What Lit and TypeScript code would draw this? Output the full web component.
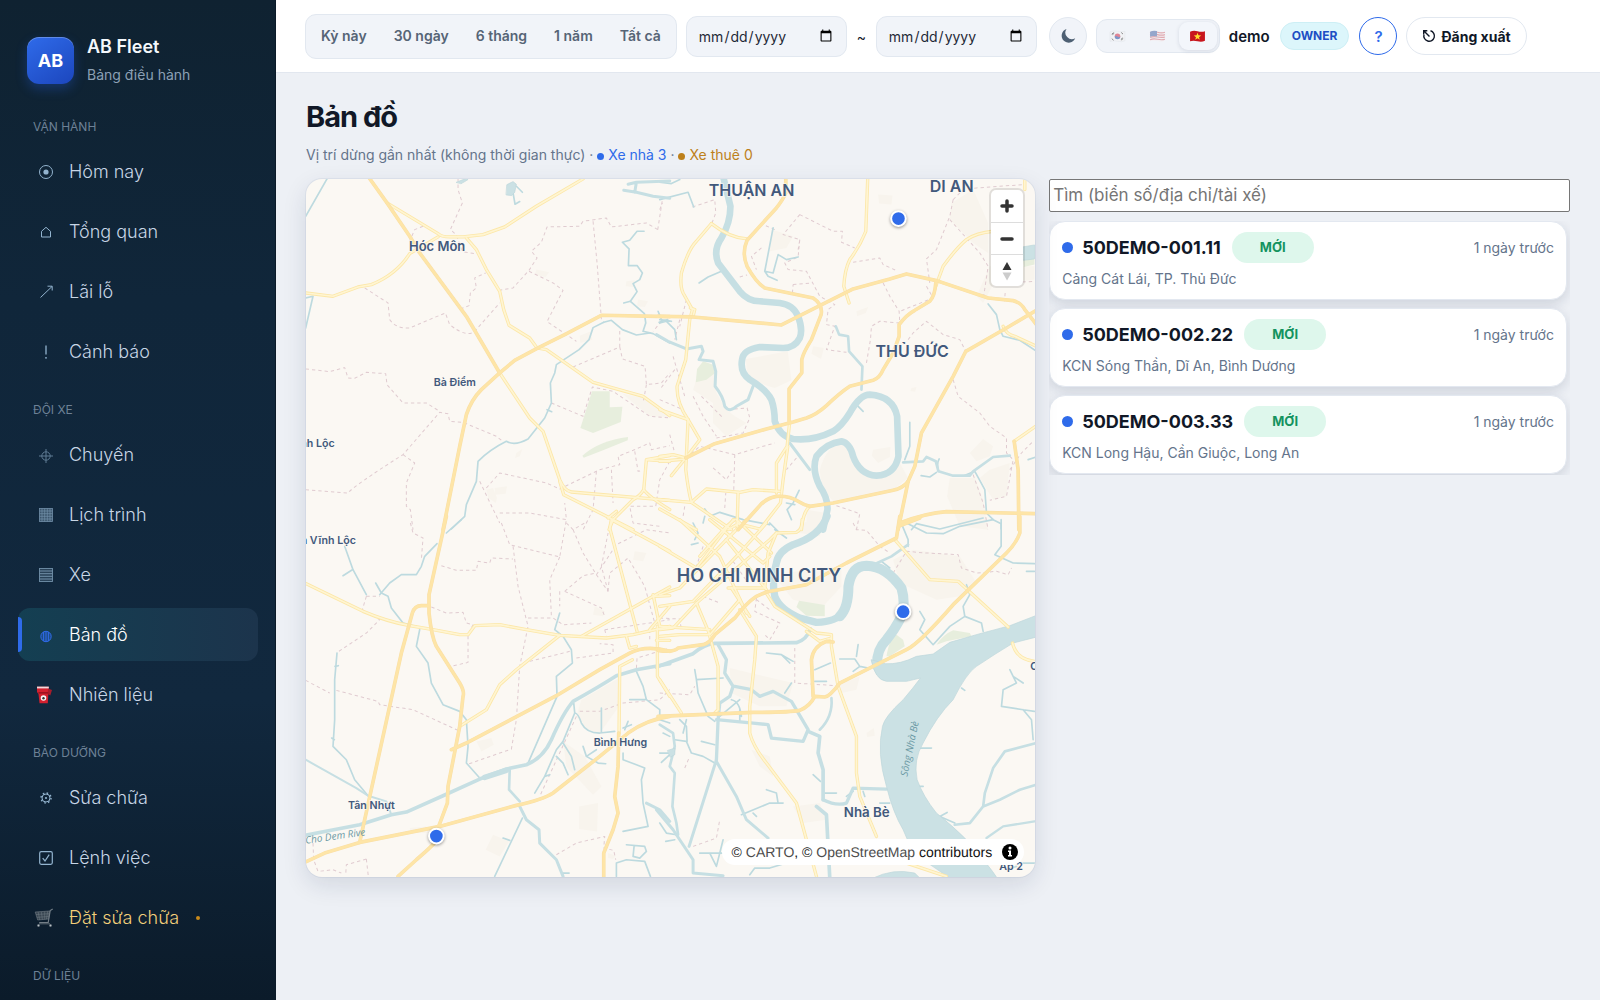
import { LitElement, html, css, svg, nothing } from "lit";
import { customElement, property } from "lit/decorators.js";
import { classMap } from "lit/directives/class-map.js";

/* ---------- icons ---------- */
const navIcons: Record<string, unknown> = {
  today: svg`<circle cx="12" cy="12" r="6.5"/><circle cx="12" cy="12" r="2.6" fill="currentColor" stroke="none"/>`,
  home: svg`<path d="M7.5 17V11.3L12 7.3l4.500 4V17z"/>`,
  profit: svg`<path d="M6.500 17.500L18 6.500M13.500 6.200H18.200V10.500"/>`,
  alert: svg`<path d="M12 5.500V14.500" stroke-width="1.300"/><circle cx="12" cy="17.800" r=".9" fill="currentColor" stroke="none"/>`,
  trip: svg`<g opacity=".6"><circle cx="12" cy="13" r="4.200"/><path d="M5 13H19M12 6V20"/></g>`,
  calendar: svg`<g opacity=".75"><rect x="5.500" y="5.500" width="13" height="13" fill="currentColor" fill-opacity=".45" stroke-width=".8"/><path d="M8 5.500V18.500M10.700 5.500V18.500M13.300 5.500V18.500M16 5.500V18.500M5.500 8H18.500M5.500 10.700H18.500M5.500 13.300H18.500M5.500 16H18.500" stroke-width=".7"/></g>`,
  truck: svg`<g opacity=".75"><rect x="5.500" y="5.500" width="13" height="13" fill="currentColor" fill-opacity=".25" stroke-width=".9"/><path d="M5.500 8H18.500M5.500 10.700H18.500M5.500 13.300H18.500M5.500 16H18.500"/></g>`,
  map: svg`<circle cx="12" cy="13.500" r="5.200" fill="currentColor" fill-opacity=".35"/><path d="M12 8.300V18.700M9.600 9V18M14.400 9V18"/>`,
  fuel: svg`<g stroke="none"><path d="M3 3.800H14.800L13.800 20.200H5.500L4.500 11 3 9z" fill="#d3202f"/><path d="M14 5.500L18 7 16.300 12.500 13.700 11z" fill="#a81c2b"/><path d="M3 3.600H14.800V5.400H3z" fill="#f3d9dc"/><path d="M4.300 9.200H14.300V10.400H4.500z" fill="#8d101c"/><circle cx="9.500" cy="15" r="2.800" fill="#f6f6f6"/><circle cx="9.500" cy="15.200" r="1.200" fill="#333"/></g>`,
  gear: svg`<circle cx="12" cy="12" r="4"/><circle cx="12" cy="12" r="1.100" fill="currentColor" stroke="none"/><circle cx="12" cy="12" r="5" stroke-width="1.400" stroke-dasharray="1.600 2.327"/>`,
  order: svg`<rect x="5.700" y="5.700" width="12.600" height="12.600" rx="1.500" stroke-width="1.200"/><path d="M8.700 12.200L11 15 15.200 8.700" stroke-width="1.200"/>`,
  cart: svg`<g stroke="#737e87"><path d="M18.700 3L16.200 4.500 14.200 16.500H5.200" stroke-width="1.200"/><path d="M1.200 6L15.700 5 14.400 13 3.700 14z" fill="#4b565f" fill-opacity=".7" stroke-width=".6"/><path d="M4.200 6L5.700 14M7.400 6L8.400 13.600M10.700 5.500V13.500M13.700 5.200L12.400 13.200M2 8.500L15.300 7.700M2.900 11.300L14.700 10.500" stroke-width=".5"/><circle cx="4.500" cy="19.500" r="1" fill="#b8c0c6"/><circle cx="16.500" cy="19.500" r="1" fill="#b8c0c6"/><path d="M5 17.800H16" stroke-width=".8"/></g>`,
};

const flags: Record<string, unknown> = {
  ko: svg`<path d="M1 2.500Q4 1 8 2T15 2V11Q12 12.500 8 11.500T1 11.500z" fill="#f1f2f4" stroke="#dcdfe4" stroke-width=".5"/><circle cx="8" cy="6.800" r="2.600" fill="#d9566b"/><path d="M5.400 7A2.600 2.600 0 0 0 10.600 7Q9.300 8.200 8 7T5.400 7z" fill="#4a6fb5"/><path d="M2.600 4.800L4.400 3.300M3.200 5.300L4.900 3.900M11.500 3.200L13.200 4.700M2.600 9L4.300 10.500M11.500 10.300L13.300 8.900M11.200 9.700L12.900 8.300" stroke="#444" stroke-width=".8"/>`,
  en: svg`<path d="M1 2.500Q4 1 8 2T15 2V11Q12 12.500 8 11.500T1 11.500z" fill="#f3eff1"/><path d="M1 3.400Q4 2 8 3T15 3M1 5.600Q4 4.200 8 5.200T15 5.200M1 7.800Q4 6.500 8 7.400T15 7.400M1 10Q4 8.700 8 9.600T15 9.600" stroke="#d98a93" stroke-width="1.100" fill="none"/><path d="M1 2.500Q4 1 7.500 1.900V6.900Q4 6 1 7.200z" fill="#6f86b8"/>`,
  vi: svg`<path d="M1 2.500Q4 1 8 2T15 2V11Q12 12.500 8 11.500T1 11.500z" fill="#c8161d"/><path d="M8 3.400L8.900 5.900 11.500 6 9.400 7.600 10.200 10.100 8 8.600 5.800 10.100 6.600 7.600 4.500 6 7.100 5.900z" fill="#ffde2e"/>`,
};

/* ---------- map geometry ----------
   The canvas is split in four tiles; each path uses its own tile's units. */
interface Tile {
  x: number;
  y: number;
  urban?: string[];
  green?: string[];
  lake?: string[];
  river?: [number, string][];
  stream?: string[];
  border?: string[];
  minor?: string[];
  major?: string[];
}

const tiles: Tile[] = [
  {
    x: 0,
    y: 0,
    urban: [
      "M710 300L748 308 738 322 706 316z",
      "M840 498L872 486 878 510 842 520z",
      "M968 672L1030 684 1110 735V742L1050 740z",
      "M585 955L622 950 618 972 586 975z",
      "M650 850L668 838 660 860 646 865z",
      "M1015 390L1045 395 1035 412 1012 410z",
      "M560 960L580 955 592 985 588 1000 566 985z",
      "M980 335L1005 332 1003 352 978 350z",
    ],
    green: [
      "M877 665H930V713L968 711 963 757 880 790 842 775z",
      "M848 858Q900 812 985 802L984 812 910 842 852 864z",
    ],
    lake: ["M622 45L640 36 650 44 645 68 636 78 620 76z", "M470 38L500 26 505 30 485 42z"],
    river: [[9, "M985 44L1010 38 1110 34M972 62L1010 68 1060 80 1110 86M1010 38L1005 68"]],
    stream: [
      "M83 26L18 140",
      "M18 385L40 380 18 475",
      "M640 70L646 104 660 96M650 50L668 68",
      "M1033 185H1012L990 212 968 218 988 238 986 288 1012 288 1028 310 1020 330 1000 342 1012 366 992 395 1034 432 1038 460 1030 485 1060 492 1110 520",
      "M972 400L992 395M1075 425L1086 452 1110 455M1078 458L1104 450",
      "M912 458L880 474 868 510 838 540 770 585 765 610 752 640 755 700 735 745 685 808Q645 830 620 815 570 840 535 875L530 935 500 1005 495 1040 455 1078",
      "M742 720L756 726",
      "M912 458L935 452 968 480 1010 496 1050 490",
    ],
    border: [
      "M475 26V60L488 100 452 180 470 196 488 246 524 252",
      "M370 170L345 180 330 215",
      "M195 355L265 400 270 450Q290 478 330 475L370 458 437 430 450 465Q500 505 525 485L600 400",
      "M482 418L508 408 512 370 530 355 525 325 558 310",
      "M1074 180L1088 90M1074 180L1040 160 935 172 920 145 850 155 840 170 742 172 725 218 695 245 712 265 688 302 640 355 600 362",
      "M880 155L892 280 905 450",
      "M688 305L760 340 790 362 742 456 830 515",
      "M18 598L90 606 135 594 145 625 165 626 200 608 258 612 262 645 310 700 380 700 420 725",
      "M18 960L145 970Q160 950 310 855L420 728 445 732 450 755 490 758 590 800 605 812",
      "M310 855L345 880 320 940 320 1010 332 1020 340 1080",
      "M540 935L600 1060M560 955L600 910 740 940 780 958 900 900 960 885 955 860 1000 842 1050 820 1055 840 1110 828",
      "M600 1030H690L800 1050 795 1000",
      "M755 700L850 740 878 652 940 665 1050 740 1110 745",
      "M820 592L960 532 960 480M960 532L968 568 1036 590 1040 645 1085 640 1110 610M1040 645L1030 700",
      "M890 905L880 1020 850 1080M935 900L940 1000M1005 845L1015 905 1030 902M1110 875L1080 930 1068 1010 990 1010 1000 1060 1080 1070",
      "M1085 455L1060 485",
    ],
    minor: [
      "M262 100L415 192Q425 202 450 202H490L550 195 615 172 710 110 850 28",
      "M18 370L100 380 175 352 215 345Q290 315 330 252L415 202",
      "M500 205L530 240 560 300 600 365 612 420 628 467 690 505 712 535 740 540 880 638 1030 680 1110 738",
      "M600 610L690 745 730 785 780 930Q795 965 815 967L1110 992",
      "M780 935L792 975 1000 1080",
      "M1110 858L1040 870 1032 960Q1020 980 1000 990L940 1050 928 1080M1032 960Q1045 980 1110 1020M1110 875L1040 870M925 1045L950 1025",
    ],
    major: ["M205 20L262 100 330 200 360 250 500 440 600 610", "M1110 441L905 437 795 495 715 535 645 572 600 610 545 660Q515 690 500 735L480 830 430 1080"],
  },
  {
    x: 1080,
    y: 0,
    urban: [
      "M258 568L384 545 395 632 345 655Q285 640 262 610z",
      "M480 900Q500 830 545 820 575 850 590 890 640 935 700 910L720 880 745 925 700 960 520 995Q480 950 480 900z",
      "M110 630L165 600 170 670 200 720 225 740 260 760 200 800 160 760 160 700 100 660z",
      "M875 100L940 60 985 160 985 250 940 220 870 150z",
      "M870 925H945L970 990 985 1080 900 1070 862 980z",
      "M990 900L1050 880 1040 980 1000 990 960 925z",
      "M655 75L698 78 695 105 658 102z",
      "M335 180L400 200 380 235 330 245z",
      "M990 290L1124 290V330L1000 345 970 400 950 380z",
      "M640 840L692 832 690 862 655 880 636 858z",
      "M930 850L970 808 1000 830 990 860 950 875z",
      "M590 425L625 412 618 430 592 440z",
      "M460 530L492 535 484 568 455 552z",
      "M755 655L770 652 766 666 752 664z",
      "M440 1020L500 1030 480 1080H440z",
    ],
    green: ["M112 598L130 575 160 585 166 610 140 630 108 638z", "M1090 270L1124 262V285L1092 292z"],
    lake: ["M1088 232L1124 226V268L1092 272z"],
    river: [
      [
        20,
        "M190 20L212 110Q212 160 185 205 160 240 175 280L240 365Q265 395 300 395L360 400Q400 405 415 440 430 480 420 505 405 535 370 535L300 532Q250 540 247 570 240 610 270 630 320 660 335 690 345 720 345 755 360 800 400 808 460 815 520 785 545 770 570 730 600 675 630 675 700 680 712 740L716 860Q705 915 650 918 600 915 580 860 570 820 545 815 500 820 470 860 455 900 480 950 505 985 503 1020L490 1080",
      ],
      [9, "M-10 495L25 515 80 538 125 530 130 545 118 570 160 575 168 605 166 650Q190 680 195 710 210 730 230 710L265 690 280 650M390 820L450 900"],
      [8, "M528 470L538 495 565 500 568 545 608 590 605 660"],
      [8, "M730 878L790 875 800 862 828 875 836 905 880 918 930 918 940 905 1000 862 1050 858"],
    ],
    stream: [
      "M0 90L85 68 102 112M0 38L35 42 60 30",
      "M340 175L315 305 340 310 355 255M355 255L380 270 415 262M315 305L325 320 352 332",
      "M185 305L145 322 118 340",
      "M0 460L20 455 45 480 50 510M0 450L35 455",
      "M985 403L1010 435 1020 480 1030 500 1080 512 1130 545",
      "M750 758V830L735 870M590 705L610 725M836 905Q830 880 838 868M784 918L810 922 830 908M912 918L945 905 975 960 980 1030 1000 1050M1000 1050L1024 1062 1024 1078",
      "M135 1018L150 1040 180 1028 250 1050 330 1065M135 1040L130 1060",
      "M418 962L400 1000 382 1020 395 1050M380 1000L405 1005",
      "M755 1080L770 1062 840 1078 970 1045",
      "M1105 870L1130 862",
    ],
    border: [
      "M98 112L165 90 168 130 155 165",
      "M420 135L520 185H548L545 218 585 235M420 135L370 195 420 210 415 240M420 210L415 262 375 280 385 300 440 305 480 380 525 405 505 420 500 465 525 470 500 540 560 548",
      "M345 180L310 165M305 235L275 260 290 300M240 322L262 316",
      "M400 345L455 340M398 370L400 345",
      "M580 278L660 265 670 285 708 302M670 340L690 380 718 425 720 460 660 455 635 470 632 510 620 580",
      "M880 90L910 60 950 55 1090 45M880 90L870 140 830 240 800 268 810 340M870 150L960 250 985 290 970 390M1050 340L1124 335",
      "M745 510L760 490 800 455 850 495 900 510 918 545M800 350L820 385 720 425",
      "M880 630L895 680 960 730 990 770 1040 805V850L1060 870 1040 980 990 992",
      "M940 915L970 1000 985 1080M1050 900L1085 850 1120 815",
      "M60 450L45 510M40 560L75 680M45 600L0 660M0 690L70 720",
      "M100 680L130 740 170 800M125 680L190 745M205 720L262 715 270 745 250 790 170 805",
      "M80 865L120 830 225 855 310 830 345 820M195 1015L198 970M225 855L222 960M30 795L45 850M75 1010L70 1040M160 895L200 930 215 905",
      "M530 1008L600 1032 590 1080M410 865L380 900M80 390L60 470",
      "M1036 370L1034 395M0 120L8 100",
    ],
    minor: [
      "M624 20L618 185Q600 230 570 270 555 300 552 350L568 400",
      "M155 162L110 215Q85 240 65 310 60 350 70 370L98 420 90 450 78 570 52 650Q50 700 85 750L120 810 78 865 35 918",
      "M155 162Q210 205 262 208",
      "M85 750L78 900Q85 960 95 998",
      "M0 720L85 750",
      "M0 860L40 855 78 865M0 875L78 868",
      "M0 990L95 998 140 958 240 968 280 960 360 965",
      "M390 755L382 830 350 880V970M384 830L370 930 362 1000 300 1080",
      "M235 968L232 1070M95 998L215 1080M0 1018L110 1080M205 1080L235 1062 300 1078",
      "M450 1010Q430 1025 425 1080",
      "M1095 30V60M92 415L105 420 100 440",
      "M1030 470Q1040 495 1065 500L1130 530",
      "M1063 815L1130 768",
      "M828 350L850 290Q890 235 920 210 950 190 1000 185",
    ],
    major: [
      "M-5 440L100 442 365 466 480 408 580 358 690 328 740 313 830 333 985 385 1060 393Q1085 400 1095 420L1130 465",
      "M378 20V70Q370 90 350 115L262 212Q245 250 262 290 290 340 315 355L460 385Q490 405 484 435L455 510Q430 550 426 570V610L388 658V755",
      "M78 865L165 822 320 778 400 757 440 745Q470 735 500 708 540 670 570 650L640 632Q660 625 670 600L700 550 718 500V465Q740 435 765 422L810 395Q825 380 828 340",
      "M1130 422L1040 475 918 545 880 620 785 790 765 890 745 935 715 1080",
      "M745 935Q730 955 700 962L520 1000 450 1010Q430 1005 415 995 390 978 350 980 320 985 300 1008L235 1080",
      "M720 1060Q800 1030 860 1026L1130 1032",
      "M1063 815L1075 900 1077 1080",
    ],
  },
  {
    x: 0,
    y: 1050,
    urban: [
      "M845 540L958 475V560L900 640 860 630 830 590z",
      "M838 860L895 850 892 935 838 928z",
      "M580 945L628 965 600 1010 558 990z",
      "M530 665L575 655 582 675 545 695z",
      "M790 665L855 710 905 800 880 825 800 740z",
      "M885 260L915 275 910 290 880 285z",
      "M1005 95L1040 100 1030 125 1000 120z",
      "M330 925L380 920 390 940 335 940z",
      "M925 1000L948 1008 940 1018 925 1015z",
    ],
    river: [
      [11, "M10 948L180 915 275 885 320 877 430 828 540 778 620 748 680 735Q730 715 755 660 790 580 820 545 900 500 950 468L1010 450 1110 432"],
      [16, "M555 773L620 752"],
      [9, "M660 860L680 900 718 930 720 970 770 1020 790 1070M1040 850L1080 870 1110 905"],
      [8, "M630 750L628 810 660 845"],
      [6, "M18 720L170 805 205 828 260 845 275 885"],
    ],
    stream: [
      "M485 0L440 40M412 72L375 110 365 140 350 165H305L270 190 240 225M228 190L245 220 265 230 275 265 310 310 355 322",
      "M135 80L160 150 200 225M130 168L158 150",
      "M360 330L350 380 385 430 395 490 430 555 480 575 500 600M500 600L505 680 500 730 540 775",
      "M112 400L105 480 105 600 100 680 140 720 165 780 205 828M106 440L116 438M96 655L104 660",
      "M780 280L765 330 790 350 815 390 818 430 770 470 772 530 720 650 685 730",
      "M822 550L825 580 790 665 770 690 735 770 705 820M790 670L815 710 825 750M770 710L790 730 805 765M735 770L750 765",
      "M825 580Q835 580 845 610 860 640 900 640L945 635M905 565V638",
      "M985 605L975 630M1010 455L1030 500 1040 540 1080 570V600L1110 610M990 540H1036",
      "M850 680L860 710 890 690M860 710L895 730 918 732",
      "M970 700V720L1010 735 1035 745 1025 780 1030 850 1045 920 970 935",
      "M668 895L585 1070M610 955L630 962",
      "M980 975L1035 980 1040 995 1020 1015 1000 1010 1003 980M950 1070V1030L980 1020 1035 1025 1052 1070M790 1060H808",
      "M1110 705L1085 728M970 625L995 615",
    ],
    border: [
      "M332 10L340 40 370 55 365 120",
      "M605 10L630 75 780 112 800 0M640 80L655 200 685 320 660 440 650 600 635 688 500 735",
      "M425 138L470 152H530L535 125 570 130 575 115 640 118",
      "M780 112L750 180 755 290M685 295L760 295 790 315 875 310M820 30L850 100 890 165 925 215M925 215L930 160 985 115 1035 200 1065 310",
      "M925 215L905 140 925 40M795 215L850 168 890 160M795 215L905 265 915 290M780 215V260M800 10L820 30 855 10M890 165L950 75 1040 30 1110 40",
      "M915 330L1050 310 1110 300M915 330L920 350M690 425L810 395M830 415L940 400 940 375 900 372M1050 330V360M1010 445L1012 415 1110 385",
      "M18 482L90 520M110 512L235 545 240 555 340 570 475 632",
      "M200 230L188 270 240 300 200 340 110 400M200 230H240M395 262L440 280 490 278 500 310 520 315 505 345V428L455 440",
      "M830 590L720 830M840 575L900 575 970 550 1080 540 1110 510",
      "M770 1005L830 970 915 950 912 985 942 992 948 1020",
      "M40 970L42 1020 55 1055 100 1050M100 1050L125 1060M200 1018L140 1035 138 1065M200 1018L206 1070",
    ],
    minor: [
      "M15 190L190 275Q260 305 330 318L400 330 480 345H505L525 318 600 315 680 330 780 347 920 355 1000 345 1110 320",
      "M480 620L560 570 600 495 650 450 780 347",
      "M845 350L1110 202",
      "M935 0L930 25 1012 335",
      "M935 0L1110 95",
      "M1060 225L1080 320M1073 320V470L1110 530",
      "M980 350L990 385 1010 380M1065 230L1110 228M1050 330L1110 260M1070 362H1110",
      "M998 420L960 440 958 640",
    ],
    major: [
      "M440 -10L388 225V280Q395 350 410 380L480 490Q495 515 490 530L480 620 445 800 443 850 415 925",
      "M388 258H365Q345 258 338 280L305 400 180 968",
      "M10 1030L75 1000 180 968 420 920 650 857Q730 840 760 820L900 710 985 640Q1040 600 1110 590",
      "M410 965Q380 995 350 1020L295 1070",
      "M455 690L500 670 770 528 900 450 990 400Q1040 375 1110 395",
      "M957 640L955 740 945 830 955 880 940 930 912 1000V1070",
    ],
  },
  {
    x: 1080,
    y: 1050,
    urban: [
      "M700 120L760 90 900 110 950 190 900 230 830 240 720 190z",
      "M210 445L400 490 380 560 300 560 215 520z",
      "M370 160L545 140 545 200 490 260 400 240 360 190z",
      "M275 690L330 710 340 770 300 740z",
      "M400 860L480 850 500 900 430 910z",
      "M620 640L642 625 645 648 622 652z",
      "M420 10L490 0 480 50 420 40z",
      "M900 0H950V10H900z",
      "M540 495L600 470 590 510 545 520z",
    ],
    green: ["M410 262L418 243 495 256V290L440 288z", "M680 410Q690 350 710 345L730 360 735 380 690 410z", "M830 375Q850 345 880 332L930 340 935 350 860 365z"],
    lake: [
      "M1130 287L1050 318 960 342 870 368 820 403 770 410Q720 435 676 432L634 420Q645 480 680 485L740 485 782 475Q760 505 730 540 675 590 668 620 650 700 680 800 700 880 730 930L760 1000 870 1075H1012Q990 1040 915 955 880 920 830 880 790 830 772 780 760 720 790 670 830 590 880 540 920 460 950 440 1010 400 1060 370L1130 352z",
      "M640 1075Q700 1045 765 1060L780 1075z",
      "M24 692L46 685 45 705 32 712z",
    ],
    river: [
      [22, "M502 -10Q480 50 400 75 355 95 350 130 335 180 345 230 360 270 420 295L470 308Q530 305 548 280"],
      [30, "M540 290Q566 265 566 200 575 138 620 138 680 140 725 205 738 250 725 290 705 330 680 360 650 390 652 435"],
      [11, "M-10 442L100 402Q130 375 165 371L410 369Q440 360 452 328"],
      [10, "M175 375L200 420 195 460 220 500 210 530 180 550 175 600 170 720"],
      [10, "M170 600L280 610 325 615 335 655 430 665 445 630 395 545 340 515 300 530 275 510 225 500"],
      [11, "M445 635L480 650 475 700 490 750 490 840M470 860L500 885 510 1075"],
      [10, "M490 840Q530 860 560 850L580 805 680 808"],
      [9, "M170 720L88 980M170 725L230 830 260 900 325 955M-10 870L40 930 100 1020 100 1060 190 1068"],
      [8, "M0 615L40 640 45 680 30 740 45 760 38 860 50 910 55 945"],
      [8, "M885 915L930 910 970 860 1020 840 1080 810 1130 795M970 860L975 820 1000 745 1035 695 1130 670"],
      [7, "M980 955L1030 920 1124 905"],
      [8, "M515 535Q520 590 480 630M652 130L695 110 745 75"],
    ],
    stream: [
      "M105 450L110 480 190 475M110 480L115 520 145 590 165 605M320 400L365 405 390 430M365 405L400 425M375 520L395 490",
      "M540 418H585L600 440M595 375L590 410M600 440L625 445M465 450L512 430M465 485H500M600 440L580 455",
      "M180 590L240 540M240 570V605M215 540Q240 545 245 590",
      "M780 275L795 300 780 330 820 375 870 320 915 290 910 260 930 225 920 195M915 290L965 310 970 335M665 125L690 145",
      "M720 0L745 60 745 80M800 40L850 42 900 20 1000 0M1024 0V80L1005 105 1060 130 1124 132M1124 155H1100M740 10L800 40",
      "M1050 450L1070 490 1030 510 1025 560 1090 570 1124 575M1060 470L1090 490M1090 570L1115 600 1120 660",
      "M780 685H815M770 800H790M780 820L790 832M885 910L840 890 862 878M905 505L915 512M660 850L690 850",
      "M45 660L80 665 95 700 130 710 165 730M60 600L80 620 82 665M10 640L30 650M125 665L165 675",
      "M245 885L330 850 370 850M320 810L350 820 355 850M280 880L290 890M120 1000H190M150 1000L170 1040 190 960M0 910L20 940 50 945M18 965L45 960M270 1065L285 1045 330 1045 380 1030",
      "M460 765L482 785M495 820H530M580 815L560 830M610 815L615 830",
      "M100 10L115 40 105 60M95 75L115 70M330 10L360 40 380 38M345 30L380 55M1080 1030H1124M1040 1050L1070 1040",
      "M80 600L70 640M0 700L25 700",
    ],
    border: [
      "M580 10L590 30 620 32 660 80 690 100",
      "M700 160L740 95 800 100 895 105 905 145 950 160 1010 155 1045 165 1055 145",
      "M405 385V490L530 498M530 498L545 520M290 235L285 275 360 310 330 360 315 345",
      "M130 80L110 140M220 125L265 190M130 230L180 250M0 295L60 298 65 330M290 240L330 270",
      "M100 980L170 955 180 900M75 745L90 710M0 520L90 525 105 500",
    ],
    minor: [
      "M0 80L110 145M0 225L60 205 200 60 260 0M0 260L100 245 240 100 320 10M110 145L220 0M60 0L180 110 260 280M0 330L40 325 110 250 330 60 350 40",
      "M110 250L150 345M0 350L60 345 150 345 240 240M200 60L320 210M150 0L310 130 330 110M230 0L335 100M225 0L200 20 120 110M0 320L150 330",
      "M205 205H315L325 100 350 40 410 38Q428 30 427 0",
      "M318 217L345 260 470 340 515 345V380L535 500 590 650 590 760 600 830 650 950M440 335L480 365 515 355",
      "M240 270L290 350 285 420 270 560V640Q280 680 320 730L410 850 470 1070",
      "M150 350L175 440V570L165 580M0 480L65 580M215 205L270 290",
      "M705 60L810 180 895 185 1045 322M1058 370Q1070 420 1124 425M740 1030L860 1070",
    ],
    major: [
      "M-5 392Q40 400 55 385L130 375Q150 370 165 345L225 295Q260 250 290 230L320 217",
      "M320 217L440 195 560 130 710 55 720 -10",
      "M1080 -10V40Q1070 70 1040 100L880 255Q780 370 740 390L540 490Q510 530 495 532L465 530Q450 560 420 572 390 578 280 578L-5 590",
      "M460 530L455 420Q460 380 500 365L520 367",
      "M720 18L780 -5",
    ],
  },
];

interface Label {
  x: number;
  y: number;
  size: number;
  text: string;
  end?: boolean;
}

const labels: Label[] = [
  { x: 328, y: 243, size: 39, text: "Hóc Môn" },
  { x: 402, y: 648, size: 32, text: "Bà Điểm" },
  { x: 105, y: 832, size: 32, text: "nh Lộc", end: true },
  { x: 1227, y: 80, size: 48, text: "THUẬN AN" },
  { x: 1890, y: 67, size: 48, text: "DI AN" },
  { x: 1727, y: 561, size: 48, text: "THỦ ĐỨC" },
  { x: 1131, y: 1237, size: 54, text: "HO CHI MINH CITY" },
  { x: 169, y: 1124, size: 32, text: "n Vĩnh Lộc", end: true },
  { x: 882, y: 1728, size: 32, text: "Bình Hưng" },
  { x: 145, y: 1918, size: 32, text: "Tân Nhựt" },
  { x: 1632, y: 1943, size: 40, text: "Nhà Bè" },
  { x: 2098, y: 2100, size: 32, text: "Ap 2" },
  { x: 2191, y: 1500, size: 32, text: "C" },
];

const markers = [
  { x: 1796, y: 147 },
  { x: 1810, y: 1326 },
  { x: 410, y: 1999 },
];

const each = (list: string[] | undefined, cls: string) => (list ?? []).map((d) => svg`<path class=${cls} d=${d}></path>`);
const layer = (draw: (t: Tile) => unknown) => tiles.map((t) => svg`<g transform="translate(${t.x} ${t.y})">${draw(t)}</g>`);

@customElement("city-map")
export class CityMap extends LitElement {
  static styles = css`
    :host {
      display: block;
      position: relative;
      height: calc(100vh - 302px);
      min-height: 360px;
      border-radius: 16px;
      overflow: hidden;
      background: #fbf8f3;
    }
    .canvas {
      display: block;
      width: 100%;
      height: 100%;
    }
    .canvas path {
      fill: none;
      stroke-linecap: round;
      stroke-linejoin: round;
    }
    .canvas .urban { fill: #f8f4ed; }
    .canvas .green { fill: #e7eedd; }
    .canvas .lake { fill: #cbe1e4; stroke: #bdd7db; stroke-width: 2; }
    .canvas .river { stroke: #c6dfe3; }
    .canvas .stream { stroke: #bddadf; stroke-width: 5; }
    .canvas .border { stroke: #e0cbd0; stroke-width: 3; stroke-dasharray: 10 9; stroke-linecap: butt; }
    .canvas .minor-case { stroke: #fce7a8; stroke-width: 10; }
    .canvas .minor { stroke: #fff5d2; stroke-width: 5; }
    .canvas .major-case { stroke: #f9dfa6; stroke-width: 11; }
    .canvas .major { stroke: #fee5a7; stroke-width: 8; }
    .place {
      font-family: Inter, "Noto Sans", sans-serif;
      font-weight: 600;
      fill: #42597c;
      stroke: #fbf8f3;
      stroke-width: 5;
      stroke-opacity: 0.8;
      paint-order: stroke;
    }
    .water-name {
      font-family: "Open Sans", "Noto Sans", sans-serif;
      font-style: italic;
      fill: #6b9aa5;
      font-size: 30px;
    }
    .marker {
      fill: #2f6bea;
      stroke: #ffffff;
      stroke-width: 6;
      filter: drop-shadow(0 3px 5px rgba(0, 0, 0, 0.4));
    }
    .zoom {
      position: absolute;
      top: 11px;
      right: 12px;
      display: grid;
      width: 32px;
      border-radius: 5px;
      background: #ffffff;
      box-shadow: 0 0 0 2px rgba(0, 0, 0, 0.1);
    }
    .zoom button {
      display: grid;
      place-items: center;
      height: 32px;
      padding: 0;
      border: 0;
      background: none;
    }
    .zoom button + button { border-top: 1px solid #dddddd; }
    .zoom svg { width: 32px; height: 32px; }
    .credit {
      position: absolute;
      right: 11px;
      bottom: 12px;
      display: flex;
      align-items: center;
      gap: 9px;
      padding: 0 5px 0 10px;
      height: 26px;
      border-radius: 13px;
      background: #ffffff;
      color: #111111;
      font: 14px/26px "Liberation Sans", Arial, sans-serif;
      text-rendering: geometricPrecision;
    }
    .credit a { color: #4d4d4d; text-decoration: none; }
    .credit button { display: grid; padding: 0; border: 0; background: none; }
    .credit svg { width: 18px; height: 18px; }
  `;

  render() {
    return html`
      <svg class="canvas" viewBox="19 28 2187 2094" preserveAspectRatio="xMidYMid slice" role="img" aria-label="Bản đồ">
        ${layer((t) => each(t.urban, "urban"))}
        ${layer((t) => each(t.green, "green"))}
        ${layer((t) => each(t.border, "border"))}
        ${layer((t) => each(t.stream, "stream"))}
        ${layer((t) => (t.river ?? []).map(([w, d]) => svg`<path class="river" stroke-width=${w} d=${d}></path>`))}
        ${layer((t) => each(t.lake, "lake"))}
        ${layer((t) => each(t.minor, "minor-case"))}
        ${layer((t) => each(t.minor, "minor"))}
        ${layer((t) => each(t.major, "major-case"))}
        ${layer((t) => each(t.major, "major"))}
        ${labels.map((l) => svg`<text class="place" x=${l.x} y=${l.y} font-size=${l.size} text-anchor=${l.end ? "end" : "start"}>${l.text}</text>`)}
        <text class="water-name" transform="translate(18 2022) rotate(-8)">Cho Dem Rive</text>
        <text class="water-name" transform="translate(1822 1822) rotate(-78)">Sông Nhà Bè</text>
        ${markers.map((m) => svg`<circle class="marker" cx=${m.x} cy=${m.y} r="22"></circle>`)}
      </svg>
      <div class="zoom">
        <button aria-label="Zoom in"><svg viewBox="0 0 32 32"><path d="M16 11V21M11 16H21" stroke="#333" stroke-width="3.500" stroke-linecap="round" /></svg></button>
        <button aria-label="Zoom out"><svg viewBox="0 0 32 32"><path d="M11 16H21" stroke="#333" stroke-width="3.500" stroke-linecap="round" /></svg></button>
        <button aria-label="Reset bearing"><svg viewBox="0 0 32 32"><path d="M11.500 15L16 7 20.500 15z" fill="#333" /><path d="M11.500 17.500L16 25.500 20.500 17.500z" fill="#ccc" /></svg></button>
      </div>
      <div class="credit">
        <span>© <a href="#carto">CARTO</a>, © <a href="#osm">OpenStreetMap</a> contributors</span>
        <button aria-label="Info"><svg viewBox="0 0 18 18"><circle cx="9" cy="9" r="8" fill="#000" /><circle cx="9" cy="5" r="1.500" fill="#fff" /><path d="M7 7.500H10V12H11V13.500H7V12H8V9H7z" fill="#fff" /></svg></button>
      </div>
    `;
  }
}

/* ---------- vehicle card ---------- */
interface Vehicle {
  plate: string;
  place: string;
  ago: string;
}

@customElement("vehicle-card")
export class VehicleCard extends LitElement {
  @property({ attribute: false }) vehicle!: Vehicle;

  static styles = css`
    :host {
      display: block;
      padding: 10px 12px;
      border: 1px solid #e3e8f0;
      border-radius: 16px;
      background: #ffffff;
      box-shadow: 0 4px 12px rgba(20, 35, 70, 0.14);
    }
    .head { display: flex; align-items: center; height: 31px; }
    .dot { width: 11px; height: 11px; margin-right: 9px; border-radius: 50%; background: #2f6bea; }
    .plate { font-size: 18px; font-weight: 700; color: #111827; }
    .badge {
      width: 82px;
      margin-left: 11px;
      border-radius: 16px;
      background: #def7ec;
      color: #14935f;
      font-size: 13px;
      font-weight: 700;
      line-height: 31px;
      text-align: center;
    }
    .ago { margin-left: auto; font-size: 14px; color: #64748b; }
    .place { margin: 6px 0 0; font-size: 14px; line-height: 20px; color: #64748b; }
  `;

  render() {
    const v = this.vehicle;
    return html`
      <div class="head">
        <span class="dot"></span><span class="plate">${v.plate}</span><span class="badge">MỚI</span><span class="ago">${v.ago}</span>
      </div>
      <p class="place">${v.place}</p>
    `;
  }
}

/* ---------- page ---------- */
interface NavItem {
  icon: string;
  text: string;
  active?: boolean;
  hot?: boolean;
}

const nav: { title: string; items: NavItem[] }[] = [
  {
    title: "VẬN HÀNH",
    items: [
      { icon: "today", text: "Hôm nay" },
      { icon: "home", text: "Tổng quan" },
      { icon: "profit", text: "Lãi lỗ" },
      { icon: "alert", text: "Cảnh báo" },
    ],
  },
  {
    title: "ĐỘI XE",
    items: [
      { icon: "trip", text: "Chuyến" },
      { icon: "calendar", text: "Lịch trình" },
      { icon: "truck", text: "Xe" },
      { icon: "map", text: "Bản đồ", active: true },
      { icon: "fuel", text: "Nhiên liệu" },
    ],
  },
  {
    title: "BẢO DƯỠNG",
    items: [
      { icon: "gear", text: "Sửa chữa" },
      { icon: "order", text: "Lệnh việc" },
      { icon: "cart", text: "Đặt sửa chữa", hot: true },
    ],
  },
  { title: "DỮ LIỆU", items: [] },
];

const periods = ["Kỳ này", "30 ngày", "6 tháng", "1 năm", "Tất cả"];

const vehicles: Vehicle[] = [
  { plate: "50DEMO-001.11", place: "Cảng Cát Lái, TP. Thủ Đức", ago: "1 ngày trước" },
  { plate: "50DEMO-002.22", place: "KCN Sóng Thần, Dĩ An, Bình Dương", ago: "1 ngày trước" },
  { plate: "50DEMO-003.33", place: "KCN Long Hậu, Cần Giuộc, Long An", ago: "1 ngày trước" },
];

@customElement("app-root")
export class AppRoot extends LitElement {
  static styles = css`
    :host {
      display: grid;
      grid-template-columns: 276px minmax(0, 1fr);
      height: 100vh;
      overflow: hidden;
      background: #edf0f5;
      color: #111827;
      font-family: Inter, "Noto Sans", sans-serif;
      font-size: 15px;
    }
    * { box-sizing: border-box; }
    button, input { font-family: inherit; color: inherit; }

    .side {
      overflow: hidden;
      padding: 37px 17px 0 18px;
      background: linear-gradient(180deg, #0f2231 0%, #10263a 30%, #11283e 70%, #0b1b2a 100%);
      border-right: 1px solid #0b1a28;
    }
    .brand { display: flex; align-items: center; gap: 13px; padding: 0 9px; height: 47px; margin-bottom: 18px; }
    .logo {
      display: grid;
      place-items: center;
      width: 47px;
      height: 47px;
      border-radius: 12px;
      background: linear-gradient(145deg, #2f6bea, #1c46bd);
      box-shadow: 0 5px 12px rgba(37, 99, 235, 0.3), inset 0 1px 0 rgba(255, 255, 255, 0.25);
      color: #ffffff;
      font-size: 18px;
      font-weight: 700;
    }
    .name { display: block; color: #f4f8fc; font-size: 18px; font-weight: 600; line-height: 28px; }
    .tag { display: block; color: #8ca0b5; font-size: 14px; line-height: 28px; }
    .nav { display: grid; gap: 7px; }
    .section {
      margin: 0;
      padding: 17px 15px 3px;
      color: #6d8196;
      font-size: 12px;
      font-weight: 400;
      line-height: 16px;
    }
    .item {
      position: relative;
      display: flex;
      align-items: center;
      gap: 11px;
      height: 53px;
      padding: 0 16px;
      border-radius: 12px;
      color: #c8d6e6;
      font-size: 18px;
      font-weight: 300;
      text-decoration: none;
    }
    .item svg {
      width: 24px;
      height: 24px;
      fill: none;
      stroke: currentColor;
      stroke-width: 1;
      color: #93b4cf;
    }
    .item.active { color: #ffffff; background: linear-gradient(90deg, #143f52, #1c344c); }
    .item.active svg { color: #2f6bea; }
    .item.active::before {
      content: "";
      position: absolute;
      left: 0;
      top: 9px;
      bottom: 9px;
      width: 4px;
      border-radius: 0 4px 4px 0;
      background: #2f6bea;
    }
    .item.hot { color: #f3cf7a; }
    .spot { width: 4px; height: 4px; margin-left: 6px; border-radius: 50%; background: #c98a1b; }

    .main { min-width: 0; overflow: hidden; }
    .bar {
      display: flex;
      align-items: center;
      height: 73px;
      padding: 0 30px 0 29px;
      border-bottom: 1px solid #e2e7ef;
      background: #ffffff;
    }
    .periods {
      display: flex;
      align-items: center;
      gap: 1px;
      height: 45px;
      padding: 0 2px;
      border: 1px solid #e2e8f0;
      border-radius: 11px;
      background: #f1f4f9;
    }
    .periods button {
      padding: 0 13px;
      border: 0;
      background: none;
      color: #566476;
      font-size: 14px;
      font-weight: 600;
      line-height: 36px;
      white-space: nowrap;
    }
    .date {
      width: 161px;
      height: 41px;
      margin-left: 9px;
      padding: 0 11px;
      border: 1px solid #e2e8f0;
      border-radius: 11px;
      background: #f1f4f9;
      font-size: 14px;
      color: #1f2937;
    }
    .till { width: 29px; text-align: center; margin-right: -9px; font-size: 14px; }
    .round {
      display: grid;
      place-items: center;
      width: 38px;
      height: 38px;
      padding: 0;
      border: 1px solid #e2e8f0;
      border-radius: 50%;
      background: #f1f4f9;
    }
    .moon { margin-left: 12px; }
    .round svg { width: 18px; height: 18px; }
    .langs {
      display: flex;
      align-items: center;
      gap: 2px;
      height: 34px;
      margin: 0 9px;
      padding: 0 2px;
      border: 1px solid #e2e8f0;
      border-radius: 11px;
      background: #f1f4f9;
    }
    .langs button { display: grid; place-items: center; width: 38px; height: 28px; padding: 0; border: 0; border-radius: 9px; background: none; }
    .langs button.on { background: #f3f6fb; box-shadow: 0 1px 4px rgba(20, 35, 70, 0.12); }
    .langs svg { width: 17px; height: 14px; opacity: 0.7; }
    .langs .on svg { opacity: 1; }
    .user { font-size: 15px; font-weight: 600; }
    .role {
      margin: 0 10px;
      padding: 0 11px;
      border: 1px solid #cdeff5;
      border-radius: 14px;
      background: #dcf6fb;
      color: #1d4fc4;
      font-size: 12px;
      font-weight: 700;
      line-height: 26px;
    }
    .help { border-color: #2f6bea; background: #ffffff; color: #2f6bea; font-size: 15px; font-weight: 600; }
    .logout {
      display: flex;
      align-items: center;
      gap: 5px;
      height: 38px;
      margin-left: 9px;
      padding: 0 15px;
      border: 1px solid #e2e8f0;
      border-radius: 19px;
      background: #ffffff;
      font-size: 14px;
      font-weight: 700;
      white-space: nowrap;
    }
    .logout svg { width: 14px; height: 14px; }

    .page { padding: 24px 30px; }
    .title { margin: 0; font-size: 29px; font-weight: 700; line-height: 40px; letter-spacing: -1px; }
    .lead { margin: 6px 0 12px; color: #64748b; font-size: 14px; line-height: 24px; }
    .own { color: #2f6bea; }
    .rent { color: #bd801b; }
    .own::before, .rent::before {
      content: "";
      display: inline-block;
      width: 7px;
      height: 7px;
      margin-right: 4px;
      border-radius: 50%;
      background: currentColor;
    }
    .columns { display: grid; grid-template-columns: 7fr 5fr; gap: 14px; align-items: start; }
    .map { box-shadow: 0 8px 24px rgba(20, 35, 70, 0.12), 0 0 0 1px #e1e6ee; }
    .search {
      display: block;
      width: 100%;
      height: 33px;
      padding: 0 3px 1px;
      border: 1px solid #767676;
      border-radius: 2px;
      background: #ffffff;
      font-size: 17px;
    }
    .search::placeholder { color: #757575; }
    .list { display: grid; gap: 8px; margin-top: 9px; padding: 0 3px 1px 0; overflow: hidden; }
  `;

  render() {
    return html`
      <aside class="side">
        <div class="brand">
          <div class="logo">AB</div>
          <div><strong class="name">AB Fleet</strong><span class="tag">Bảng điều hành</span></div>
        </div>
        <nav class="nav">
          ${nav.map(
            (group) => html`
              <h2 class="section">${group.title}</h2>
              ${group.items.map(
                (item) => html`
                  <a class=${classMap({ item: true, active: !!item.active, hot: !!item.hot })} href="#${item.icon}">
                    <svg viewBox="0 0 24 24" aria-hidden="true">${navIcons[item.icon]}</svg>
                    <span>${item.text}</span>
                    ${item.hot ? html`<span class="spot"></span>` : nothing}
                  </a>
                `,
              )}
            `,
          )}
        </nav>
      </aside>
      <div class="main">
        <header class="bar">
          <div class="periods">${periods.map((p) => html`<button>${p}</button>`)}</div>
          <input class="date" type="date" aria-label="Từ ngày" />
          <span class="till">~</span>
          <input class="date" type="date" aria-label="Đến ngày" />
          <button class="round moon" aria-label="Dark mode">
            <svg viewBox="0 0 18 18"><path d="M7.500 2A7 7 0 1 0 16.200 11.200 6.500 6.500 0 0 1 7.500 2z" fill="#4e6073" /></svg>
          </button>
          <div class="langs">
            ${["ko", "en", "vi"].map(
              (code) => html`<button class=${classMap({ on: code === "vi" })} aria-label=${code}><svg viewBox="0 0 16 13">${flags[code]}</svg></button>`,
            )}
          </div>
          <span class="user">demo</span>
          <span class="role">OWNER</span>
          <button class="round help">?</button>
          <button class="logout">
            <svg viewBox="0 0 14 14" fill="none" stroke="#111827" stroke-width="1.400"><path d="M8.500 1.800A5.300 5.300 0 1 1 2 5.500M7.500 7.500L2.200 2.200M1.700 5.300V1.700H5.300" /></svg>
            Đăng xuất
          </button>
        </header>
        <main class="page">
          <h1 class="title">Bản đồ</h1>
          <p class="lead">Vị trí dừng gần nhất (không thời gian thực) · <span class="own">Xe nhà 3</span> · <span class="rent">Xe thuê 0</span></p>
          <div class="columns">
            <city-map class="map"></city-map>
            <section>
              <input class="search" type="text" placeholder="Tìm (biển số/địa chỉ/tài xế)" aria-label="Tìm (biển số/địa chỉ/tài xế)" />
              <div class="list">${vehicles.map((v) => html`<vehicle-card .vehicle=${v}></vehicle-card>`)}</div>
            </section>
          </div>
        </main>
      </div>
    `;
  }
}
